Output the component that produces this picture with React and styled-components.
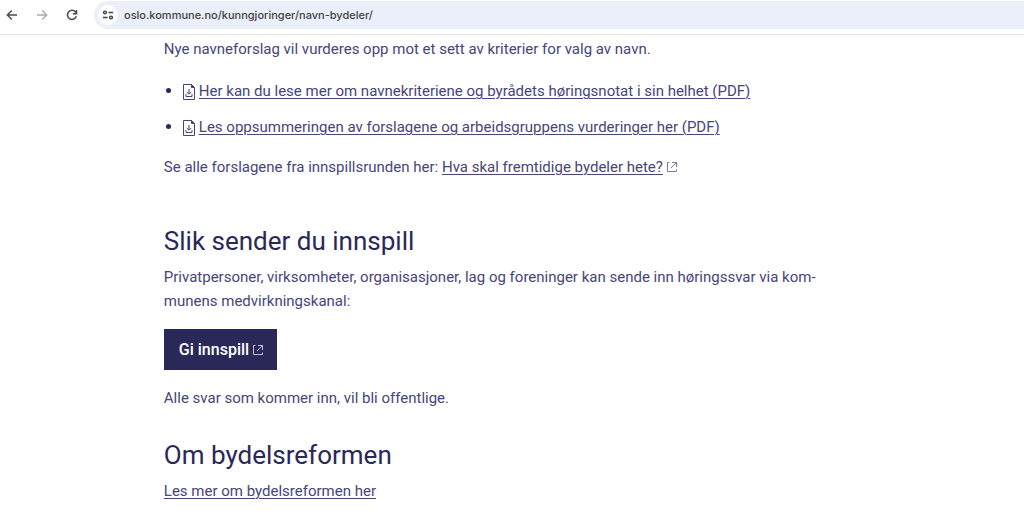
import React from 'react'
import styled, { createGlobalStyle } from 'styled-components'

const GlobalStyle = createGlobalStyle`
* {
box-sizing: border-box;
}
body {
margin: 0;
background-color: #fff;
color: #47457a;
font-family: Roboto, "Liberation Sans", sans-serif;
font-size: 15px;
line-height: 24px;
}
`
const Toolbar = styled.header`
height: 35px;
padding-bottom: 4px;
padding-left: 4px;
border-bottom: 1px solid #e4e4e6;
display: flex;
align-items: center;
gap: 14px;
`
const NavButton = styled.button`
width: 16px;
height: 16px;
padding: 0;
border: none;
background: none;
display: flex;
color: ${props => props.disabled ? '#a9abad' : '#46484b'};
`
const AddressBar = styled.div`
flex: 1;
height: 28px;
padding-left: 4px;
border-radius: 14px 0 0 14px;
background-color: #ebeff9;
display: flex;
align-items: center;
gap: 6px;
`
const SiteButton = styled.button`
width: 20px;
height: 20px;
padding: 3px;
border: none;
border-radius: 50%;
background-color: #fff;
color: #3c3e42;
display: flex;
`
const Address = styled.input`
flex: 1;
min-width: 0;
padding: 0;
border: none;
outline: none;
background: none;
color: #404246;
font-family: Inter, "Liberation Sans", sans-serif;
font-size: 11px;
font-weight: 500;
`
const Main = styled.main`
padding: 2px 16% 12px;
`
const Section = styled.section`
margin-bottom: ${props => props.$gap || 0}px;
`
const Text = styled.p`
margin: 0 0 16px;
`
const Title = styled.h2`
margin: 0 0 8px;
color: #2a2859;
font-size: 26px;
font-weight: 400;
line-height: 32px;
`
const List = styled.ul`
margin: 18px 0 16px;
padding-left: 19px;
display: flex;
flex-direction: column;
gap: 12px;
`
const Item = styled.li`
&::marker {
color: #2a2859;
font-size: 16px;
}
`
const Link = styled.a`
color: inherit;
text-decoration: underline;
text-decoration-thickness: 1px;
text-underline-offset: 2px;
`
const ButtonLink = styled.a`
height: 41px;
width: max-content;
margin-bottom: 16px;
padding: 0 14px 0 15px;
background-color: #2a2859;
color: #fff;
font-size: 16px;
font-weight: 500;
text-decoration: none;
display: flex;
align-items: center;
gap: 4px;
`
const FileSvg = styled.svg`
width: 12px;
height: 16px;
margin-right: 4px;
vertical-align: -4px;
`
const ExternalSvg = styled.svg`
width: 10px;
height: 10px;
margin-left: ${props => props.$inline ? 4 : 0}px;
opacity: 0.7;
`

const FileIcon = () => (
    <FileSvg viewBox="0 0 12 16" fill="none" stroke="currentColor" aria-hidden="true">
        <path d="M.5.5h8l3 3v12H.5z" />
        <path d="M8.5.5v3h3z" fill="currentColor" />
        <path d="M6 5v5M3.800 8 6 10.200 8.200 8M3 10v2.500h6V10" />
    </FileSvg>
)

const ExternalIcon = ({ inline }) => (
    <ExternalSvg $inline={inline} viewBox="0 0 10 10" fill="none" stroke="currentColor" aria-hidden="true">
        <path d="M2.500.5h-2v9h9v-2M5 .5h4.500V5M9.500.5 4 6" />
    </ExternalSvg>
)

const BrowserBar = () => (
    <Toolbar>
        <NavButton aria-label="Tilbake">
            <svg viewBox="0 0 16 16" width="16" height="16" fill="none" stroke="currentColor" strokeWidth="1.4">
                <path d="M13 8H3.500M7.800 3.500 3.300 8l4.500 4.500" />
            </svg>
        </NavButton>
        <NavButton aria-label="Frem" disabled>
            <svg viewBox="0 0 16 16" width="16" height="16" fill="none" stroke="currentColor" strokeWidth="1.4">
                <path d="M3 8h9.500M8.200 3.500 12.700 8l-4.500 4.500" />
            </svg>
        </NavButton>
        <NavButton aria-label="Last inn på nytt">
            <svg viewBox="0 0 16 16" width="16" height="16" fill="none" stroke="currentColor" strokeWidth="1.5">
                <path d="M12.300 9.300A4.500 4.500 0 1 1 11.500 5l1 1.200" />
                <path d="M12.500 3v3.700H8.800" />
            </svg>
        </NavButton>
        <AddressBar>
            <SiteButton aria-label="Nettstedsinformasjon">
                <svg viewBox="0 0 14 14" width="14" height="14" fill="none" stroke="currentColor" strokeWidth="1.4">
                    <circle cx="4" cy="4.500" r="1.400" />
                    <path d="M7.500 4.500H12M2 9.500h4.500" />
                    <circle cx="10" cy="9.500" r="1.400" />
                </svg>
            </SiteButton>
            <Address aria-label="Adresse" defaultValue="oslo.kommune.no/kunngjoringer/navn-bydeler/" />
        </AddressBar>
    </Toolbar>
)

const App = () => {
    return (
        <>
            <GlobalStyle />
            <BrowserBar />
            <Main lang="no">
                <Section $gap={46}>
                    <Text>Nye navneforslag vil vurderes opp mot et sett av kriterier for valg av navn.</Text>
                    <List>
                        <Item>
                            <FileIcon />
                            <Link href="#horingsnotat">Her kan du lese mer om navnekriteriene og byrådets høringsnotat i sin helhet (PDF)</Link>
                        </Item>
                        <Item>
                            <FileIcon />
                            <Link href="#oppsummering">Les oppsummeringen av forslagene og arbeidsgruppens vurderinger her (PDF)</Link>
                        </Item>
                    </List>
                    <Text>
                        Se alle forslagene fra innspillsrunden her: <Link href="#forslag">Hva skal fremtidige bydeler hete?</Link>
                        <ExternalIcon inline />
                    </Text>
                </Section>
                <Section $gap={29}>
                    <Title>Slik sender du innspill</Title>
                    <Text>
                        Privatpersoner, virksomheter, organisasjoner, lag og foreninger kan sende inn høringssvar via kom-<br />
                        munens medvirkningskanal:
                    </Text>
                    <ButtonLink href="#innspill">
                        Gi innspill
                        <ExternalIcon />
                    </ButtonLink>
                    <Text>Alle svar som kommer inn, vil bli offentlige.</Text>
                </Section>
                <Section>
                    <Title>Om bydelsreformen</Title>
                    <Link href="#bydelsreformen">Les mer om bydelsreformen her</Link>
                </Section>
            </Main>
        </>
    )
}

export default App
